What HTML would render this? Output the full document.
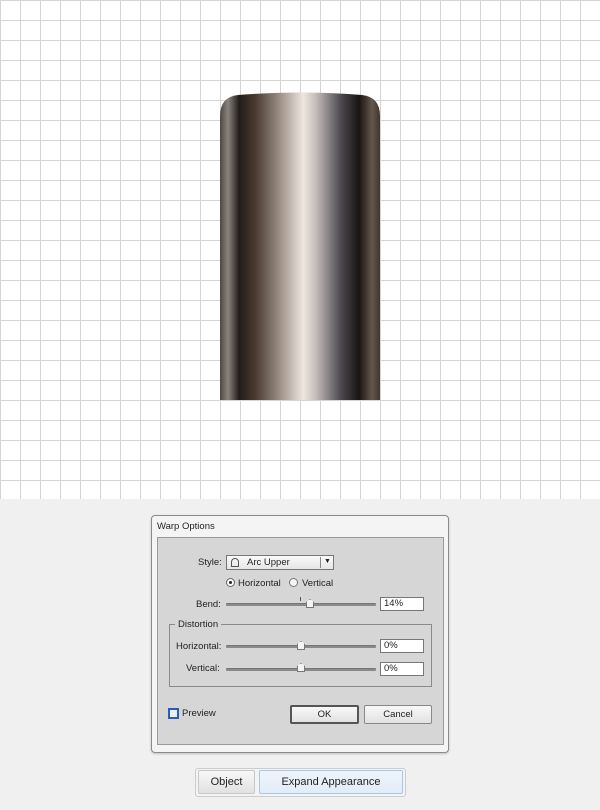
<!DOCTYPE html>
<html><head><style>
*{margin:0;padding:0;box-sizing:border-box}
body{width:600px;height:810px;background:#f0f0f0;position:relative;overflow:hidden;font-family:"Liberation Sans",sans-serif;font-size:9.5px;color:#222}
#grid{position:absolute;left:0;top:0;width:600px;height:499px;background-color:#fff;
background-image:linear-gradient(#d4d4d4 1px,transparent 1px),linear-gradient(90deg,#d4d4d4 1px,transparent 1px);background-size:20px 20px}
.a{position:absolute}
.lbl{position:absolute;white-space:nowrap}
.track{position:absolute;height:3px;background:#8a8a8a;border-top:1px solid #777;border-radius:1px}
.thumb{position:absolute;width:8px;height:9px;background:#f4f4f4;border:1px solid #777;clip-path:polygon(50% 0,100% 35%,100% 100%,0 100%,0 35%)}
.inp{position:absolute;width:44px;height:14px;background:#fff;border:1px solid #777;padding-left:3px;line-height:12px}
.btn{position:absolute;border:1px solid #888;background:linear-gradient(#f8f8f8,#e2e2e2);text-align:center;border-radius:2px}
</style></head><body>
<div id="grid"></div>
<svg class="a" style="left:220px;top:90px" width="160" height="310">
<defs><linearGradient id="g" x1="0" x2="1">
<stop offset="0" stop-color="#4e4640"/><stop offset="0.05" stop-color="#8a847f"/>
<stop offset="0.12" stop-color="#221c1a"/><stop offset="0.22" stop-color="#4a3a30"/>
<stop offset="0.35" stop-color="#8e8278"/><stop offset="0.52" stop-color="#efe6df"/>
<stop offset="0.6" stop-color="#c4bcb8"/><stop offset="0.76" stop-color="#4a464e"/>
<stop offset="0.87" stop-color="#1a1513"/><stop offset="0.95" stop-color="#66564a"/>
<stop offset="1" stop-color="#403630"/></linearGradient></defs>
<path d="M0 310 V26 Q0 7 18 5 Q80 0 142 5 Q160 7 160 26 V310 Z" fill="url(#g)"/>
</svg>
<div class="a" style="left:151px;top:515px;width:298px;height:238px;background:#f4f4f4;border:1px solid #8a8a8a;border-radius:4px;box-shadow:0 1px 2px rgba(0,0,0,.2)"></div>
<div class="lbl" style="left:157px;top:521px">Warp Options</div>
<div class="a" style="left:157px;top:537px;width:287px;height:208px;background:#d6d6d6;border:1px solid #9a9a9a"></div>
<div class="lbl" style="left:198px;top:557px">Style:</div>
<div class="a" style="left:226px;top:555px;width:108px;height:15px;border:1px solid #777;background:linear-gradient(#fafafa,#e6e6e6)"></div>
<div class="a" style="left:231px;top:558px;width:8px;height:9px;border:1px solid #555;border-radius:4px 4px 0 0"></div>
<div class="lbl" style="left:247px;top:557px">Arc Upper</div>
<div class="a" style="left:320px;top:557px;width:1px;height:11px;background:#888"></div>
<div class="lbl" style="left:324px;top:558px;font-size:7px">▼</div>
<div class="a" style="left:226px;top:578px;width:9px;height:9px;border:1px solid #666;border-radius:50%;background:#fafafa"></div>
<div class="a" style="left:229px;top:581px;width:3px;height:3px;border-radius:50%;background:#222"></div>
<div class="lbl" style="left:238px;top:578px">Horizontal</div>
<div class="a" style="left:289px;top:578px;width:9px;height:9px;border:1px solid #777;border-radius:50%;background:#f6f6f6"></div>
<div class="lbl" style="left:302px;top:578px">Vertical</div>
<div class="lbl" style="left:196px;top:599px">Bend:</div>
<div class="track" style="left:226px;top:603px;width:150px"></div>
<div class="a" style="left:300px;top:597px;width:1px;height:4px;background:#555"></div>
<div class="thumb" style="left:306px;top:599px"></div>
<div class="inp" style="left:380px;top:597px">14%</div>
<div class="a" style="left:169px;top:624px;width:263px;height:63px;border:1px solid #8a8a8a"></div>
<div class="lbl" style="left:175px;top:619px;background:#d6d6d6;padding:0 3px">Distortion</div>
<div class="lbl" style="left:176px;top:641px">Horizontal:</div>
<div class="track" style="left:226px;top:645px;width:150px"></div>
<div class="thumb" style="left:297px;top:641px"></div>
<div class="inp" style="left:380px;top:639px">0%</div>
<div class="lbl" style="left:186px;top:663px">Vertical:</div>
<div class="track" style="left:226px;top:668px;width:150px"></div>
<div class="thumb" style="left:297px;top:663px"></div>
<div class="inp" style="left:380px;top:662px">0%</div>
<div class="a" style="left:168px;top:708px;width:11px;height:11px;border:2px solid #2a5cc0;background:#eee"></div>
<div class="lbl" style="left:182px;top:708px">Preview</div>
<div class="btn" style="left:290px;top:705px;width:69px;height:19px;border:2px solid #555;line-height:15px">OK</div>
<div class="btn" style="left:364px;top:705px;width:68px;height:19px;line-height:17px">Cancel</div>
<div class="a" style="left:195px;top:768px;width:211px;height:29px;border:1px solid #ccc;border-radius:3px;background:#f3f3f3"></div>
<div class="btn" style="left:198px;top:770px;width:57px;height:24px;line-height:22px;font-size:11px;border-color:#c8c8c8">Object</div>
<div class="btn" style="left:259px;top:770px;width:144px;height:24px;line-height:22px;font-size:11px;border-color:#a8c8ea;background:linear-gradient(#eef4fb,#e2ecf7)">Expand Appearance</div>
</body></html>
